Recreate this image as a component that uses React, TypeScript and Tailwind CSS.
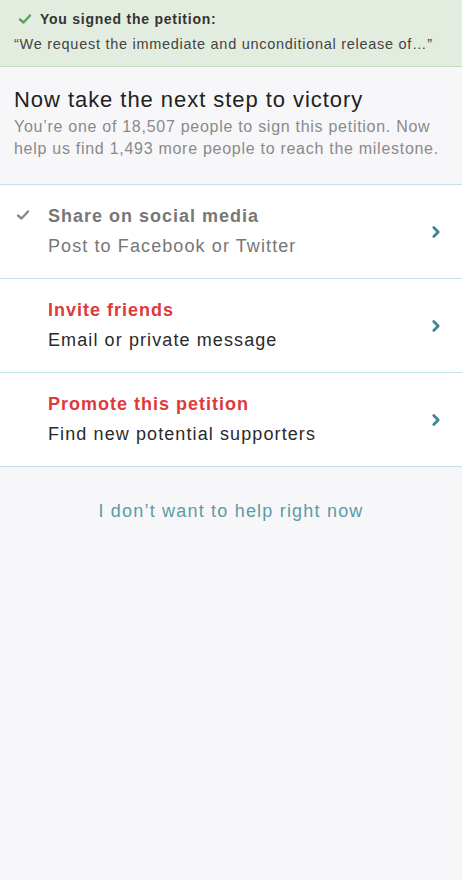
import { ChevronRight } from 'lucide-react';

const font = { fontFamily: '"Liberation Sans", Arial, sans-serif' };

function Check({ className }: { className?: string }) {
    return (
        <svg viewBox="0 0 14 12" className={className} fill="none">
            <path d="M2 6.5 L5.5 9.5 L12 2.5" stroke="currentColor" strokeWidth="2.4" strokeLinecap="round" strokeLinejoin="round" />
        </svg>
    );
}

const actions = [
    { title: 'Share on social media', sub: 'Post to Facebook or Twitter', done: true },
    { title: 'Invite friends', sub: 'Email or private message', done: false },
    { title: 'Promote this petition', sub: 'Find new potential supporters', done: false },
];

export default function App() {
    return (
        <div className="min-h-[880px] w-full bg-[#f7f7f9]" style={font}>
            {/* Signed banner */}
            <div className="h-[67px] bg-[#e3eddf] border-b border-[#c3dbbd] px-[14px] pt-[10px]">
                <div className="flex items-center gap-[8px] pl-[4px] text-[14px] tracking-[0.75px] font-bold text-[#333] leading-[18px]">
                    <Check className="w-[14px] h-[12px] text-[#5aa05a]" />
                    You signed the petition:
                </div>
                <p className="mt-[7px] text-[14.5px] tracking-[0.72px] text-[#444] leading-[18px] whitespace-nowrap">
                    “We request the immediate and unconditional release of…”
                </p>
            </div>

            {/* Next step */}
            <div className="px-[14px] pt-[20px] pb-[24px] border-b border-[#c3e1e8]">
                <h1 className="text-[22px] tracking-[0.95px] text-[#222] leading-[26px] whitespace-nowrap">Now take the next step to victory</h1>
                <p className="mt-[3px] text-[16px] tracking-[0.72px] text-[#8a8a8a] leading-[22px] whitespace-nowrap">
                    You’re one of 18,507 people to sign this petition. Now
                    <br />
                    help us find 1,493 more people to reach the milestone.
                </p>
            </div>

            {/* Actions */}
            <div>
                {actions.map((a) => (
                    <div key={a.title} className="h-[94px] bg-white border-b border-[#c3e1e8] flex items-center pl-[16px] pr-[17px]">
                        <div className="w-[32px] self-start pt-[24px]">
                            {a.done && <Check className="w-[14px] h-[12px] text-[#8a8a8a]" />}
                        </div>
                        <div className="flex-1 -mt-[2px]">
                            <div className={`text-[18px] tracking-[1px] font-bold leading-[24px] ${a.done ? 'text-[#777]' : 'text-[#e0393b]'}`}>
                                {a.title}
                            </div>
                            <div className={`mt-[6px] text-[18px] tracking-[1.1px] leading-[24px] ${a.done ? 'text-[#777]' : 'text-[#2a2a2a]'}`}>
                                {a.sub}
                            </div>
                        </div>
                        <ChevronRight size={18} strokeWidth={3.6} className="text-[#3a8696]" />
                    </div>
                ))}
            </div>

            <div className="pt-[32px] text-center text-[18px] tracking-[1.2px] text-[#5a9ca8] leading-[24px]">
                I don’t want to help right now
            </div>
        </div>
    );
}
